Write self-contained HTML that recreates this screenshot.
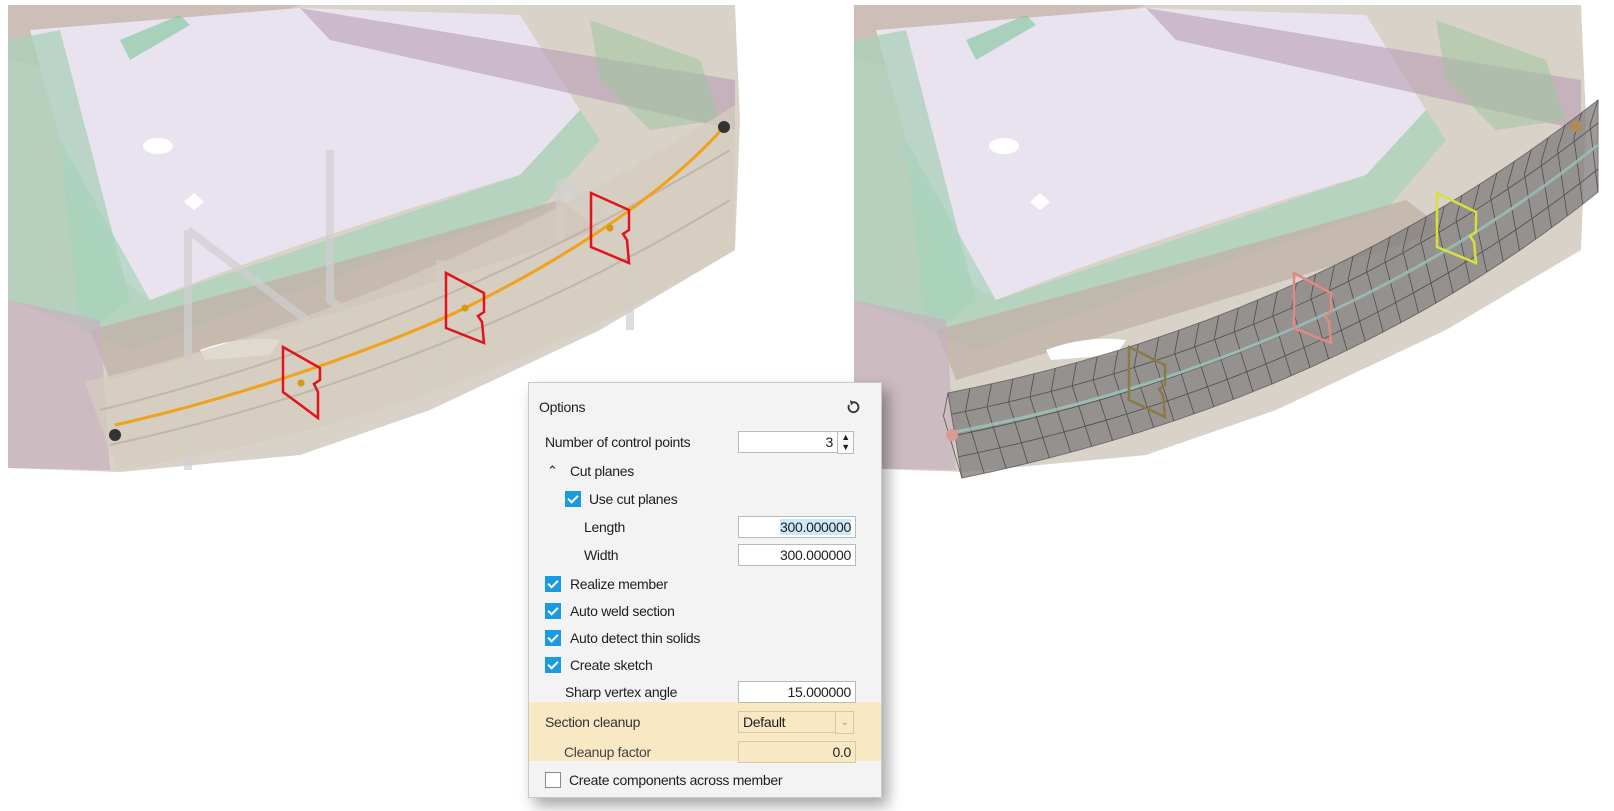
<!DOCTYPE html>
<html><head><meta charset="utf-8">
<style>
html,body{margin:0;padding:0;background:#fff;width:1614px;height:811px;overflow:hidden;font-family:"Liberation Sans",sans-serif}
svg{position:absolute;left:0;top:0}
#dlg{position:absolute;left:528px;top:382px;width:352px;height:414px;background:#f3f3f3;border:1px solid #c9c9c9;box-shadow:6px 8px 14px rgba(0,0,0,.35);color:#1e1e1e;font-size:14px;letter-spacing:-0.3px}
#dlg .t{position:absolute;white-space:nowrap;line-height:16px;transform:translateY(-8px)}
#dlg .in{position:absolute;left:209px;width:112px;height:20px;background:#fff;border:1px solid #b9b9b9;text-align:right;padding-right:4px;line-height:20px;font-size:14px;transform:translateY(-11px)}
#dlg .cb{position:absolute;width:16px;height:16px;background:#1a9be0;transform:translateY(-8px)}
#dlg .cb:after{content:"";position:absolute;left:5px;top:2px;width:4px;height:8px;border:solid #fff;border-width:0 2px 2px 0;transform:rotate(45deg)}
#band{position:absolute;left:0;top:319px;width:352px;height:59px;background:#f8e8c4}
</style></head><body>
<svg width="1614" height="811" viewBox="0 0 1614 811">
<defs>
<g id="scene">
 <polygon points="8,5 735,5 740,120 735,250 600,330 430,410 300,455 120,472 8,468" fill="#d9d2c8"/>
 <polygon points="8,5 300,5 200,40 60,70 8,60" fill="#c9b9b4" opacity=".8"/>
 <path d="M30,30 L300,8 L520,15 L580,110 L520,175 Q300,240 150,300 Q70,250 60,140 Z" fill="#e9e3f0"/>
 <path d="M8,40 L60,30 L130,300 L90,330 L8,300 Z" fill="#a9cfb9" opacity=".75"/>
 <path d="M60,140 L150,300 L520,175 L580,110 L600,140 L540,210 Q350,270 130,350 L80,330 Z" fill="#a7d3bb" opacity=".7"/>
 <path d="M90,330 Q350,260 560,200 L600,230 Q380,300 110,380 Z" fill="#c0b3a7" opacity=".8"/>
 <path d="M300,8 L735,80 L735,130 L330,40 Z" fill="#b99cb4" opacity=".6"/>
 <path d="M590,20 L700,60 L720,120 L650,130 L600,80 Z" fill="#9fc79f" opacity=".55"/>
 <path d="M8,300 L100,320 L110,470 L8,468 Z" fill="#c7b0bf" opacity=".7"/>
 <path d="M120,40 L180,15 L190,25 L130,60 Z" fill="#7dc59a" opacity=".6"/>
 <ellipse cx="158" cy="146" rx="15" ry="8" fill="#fff"/>
 <polygon points="194,193 204,202 194,210 184,202" fill="#fff"/>
 <path d="M200,350 Q240,335 280,340 L270,355 L205,360 Z" fill="#fff"/>
</g>
</defs>
<use href="#scene"/>
<use href="#scene" transform="translate(846,0)"/>
<rect x="0" y="0" width="1614" height="5" fill="#fff"/>
<rect x="740" y="0" width="105" height="811" fill="#fff"/>
<rect x="1600" y="0" width="14" height="811" fill="#fff"/>
<g fill="none" stroke="#cfcfcf" stroke-width="8" opacity=".7">
 <path d="M188,230 L188,470 M188,230 L320,330 M330,150 L330,300 L440,380 M440,380 L440,260 M560,180 L560,320 M560,180 L630,240 L630,330"/>
</g>
<path d="M85,382 Q430,300 735,105 L735,250 Q450,420 117,470 Z" fill="#d4ccbf" opacity=".75"/>
<path d="M100,410 Q430,330 730,150" fill="none" stroke="#b6ad9f" stroke-width="2" opacity=".7"/>
<path d="M110,445 Q450,370 730,200" fill="none" stroke="#b6ad9f" stroke-width="2" opacity=".7"/>
<path d="M115,425 C250,395 400,340 465,308 S650,210 724,127" fill="none" stroke="#f0a21a" stroke-width="3"/>
<g fill="none" stroke="#e0141a" stroke-width="2.5">
 <polygon points="283,347 320,368 320,380 314,384 318,392 318,418 283,392"/>
 <polygon points="446,273 484,293 484,312 478,316 482,322 484,343 446,328"/>
 <polygon points="591,193 629,210 629,230 623,234 627,240 629,263 591,247"/>
</g>
<circle cx="301" cy="383" r="3.5" fill="#d49a10"/><circle cx="465" cy="308" r="3.5" fill="#d49a10"/><circle cx="610" cy="228" r="3.5" fill="#d49a10"/>
<circle cx="115" cy="435" r="6" fill="#333"/><circle cx="724" cy="127" r="6" fill="#333"/>
<path d="M948,393 Q1320,320 1598,100 L1598,192 Q1340,400 962,478 Z" fill="#858280" opacity=".8" stroke="#555" stroke-width="1"/>
<g id="mesh" stroke="#3d3d3d" stroke-width=".8" fill="none" opacity=".8"></g>
<path d="M955,432 Q1330,360 1598,145" fill="none" stroke="#9fc5c0" stroke-width="3" opacity=".8"/>
<g fill="none" stroke-width="2.5">
 <polygon points="1129,347 1165,365 1165,385 1159,389 1163,395 1165,417 1129,400" stroke="#8c7a45"/>
 <polygon points="1294,273 1331,293 1331,312 1325,316 1329,322 1331,343 1294,328" stroke="#e08a85"/>
 <polygon points="1437,193 1476,212 1476,232 1470,236 1474,242 1476,263 1437,247" stroke="#d7e03c"/>
</g>
<circle cx="952" cy="435" r="6" fill="#d99a95"/><circle cx="1576" cy="126" r="6" fill="#b08a55"/>
</svg>
<div id="dlg">
 <div id="band"></div>
 <div class="t" style="left:10px;top:24px">Options</div>
 <svg style="left:316px;top:16px" width="16" height="16" viewBox="0 0 16 16"><path d="M4,6 A5,5 0 1 0 8,3.2" fill="none" stroke="#333" stroke-width="1.8"/><path d="M5,1 L9,3.2 L6,6.5 Z" fill="#333"/></svg>
 <div class="t" style="left:16px;top:59px">Number of control points</div>
 <div class="in" style="top:59px;width:94px">3</div>
 <div style="position:absolute;left:308px;top:48px;width:15px;height:21px;border:1px solid #b9b9b9;background:#fafafa;font-size:9px;line-height:10px;text-align:center">&#9650;<br>&#9660;</div>
 <div class="t" style="left:18px;top:88px;font-size:13px">&#8963;</div>
 <div class="t" style="left:41px;top:88px">Cut planes</div>
 <div class="cb" style="left:36px;top:116px"></div>
 <div class="t" style="left:60px;top:116px">Use cut planes</div>
 <div class="t" style="left:55px;top:144px">Length</div>
 <div class="in" style="top:144px"><span style="background:#cde8f7">300.000000</span></div>
 <div class="t" style="left:55px;top:172px">Width</div>
 <div class="in" style="top:172px">300.000000</div>
 <div class="cb" style="left:16px;top:201px"></div><div class="t" style="left:41px;top:201px">Realize member</div>
 <div class="cb" style="left:16px;top:228px"></div><div class="t" style="left:41px;top:228px">Auto weld section</div>
 <div class="cb" style="left:16px;top:255px"></div><div class="t" style="left:41px;top:255px">Auto detect thin solids</div>
 <div class="cb" style="left:16px;top:282px"></div><div class="t" style="left:41px;top:282px">Create sketch</div>
 <div class="t" style="left:36px;top:309px">Sharp vertex angle</div>
 <div class="in" style="top:309px">15.000000</div>
 <div class="t" style="left:16px;top:339px;color:#333">Section cleanup</div>
 <div class="in" style="top:339px;width:92px;text-align:left;padding:0 0 0 4px;background:#f8e8c4;border-color:#d6c9a8">Default</div>
 <div style="position:absolute;left:306px;top:328px;width:17px;height:21px;border:1px solid #d6c9a8;background:#f8e8c4;color:#999;font-size:10px;line-height:21px;text-align:center">&#8964;</div>
 <div class="t" style="left:35px;top:369px;color:#444">Cleanup factor</div>
 <div class="in" style="top:369px;background:#f8e8c4;border-color:#d6c9a8">0.0</div>
 <div style="position:absolute;left:16px;top:389px;width:14px;height:14px;border:1px solid #888;background:#fff"></div>
 <div class="t" style="left:40px;top:397px">Create components across member</div>
</div>
<script>
(function(){
 var g=document.getElementById('mesh'),s='';
 function q(p0,p1,p2,t){return[(1-t)*(1-t)*p0[0]+2*(1-t)*t*p1[0]+t*t*p2[0],(1-t)*(1-t)*p0[1]+2*(1-t)*t*p1[1]+t*t*p2[1]];}
 var T=[[948,393],[1320,320],[1598,100]],B=[[962,478],[1340,400],[1598,192]];
 for(var i=0;i<=34;i++){var t=i/34,a=q(T[0],T[1],T[2],t),b=q(B[0],B[1],B[2],t),
  m=[a[0]+(b[0]-a[0])*0.25,a[1]+(b[1]-a[1])*0.25];
  s+='<path d="M'+a[0]+','+a[1]+' L'+(m[0]-8)+','+(m[1]+2)+' L'+b[0]+','+b[1]+'"/>';}
 for(var k=1;k<4;k++){var f=k/4,d='';
  for(var i=0;i<=30;i++){var t=i/30,a=q(T[0],T[1],T[2],t),b=q(B[0],B[1],B[2],t);
   d+=(i?'L':'M')+(a[0]+(b[0]-a[0])*f)+','+(a[1]+(b[1]-a[1])*f);}
  s+='<path d="'+d+'"/>';}
 g.innerHTML=s;
})();
</script>
</body></html>
